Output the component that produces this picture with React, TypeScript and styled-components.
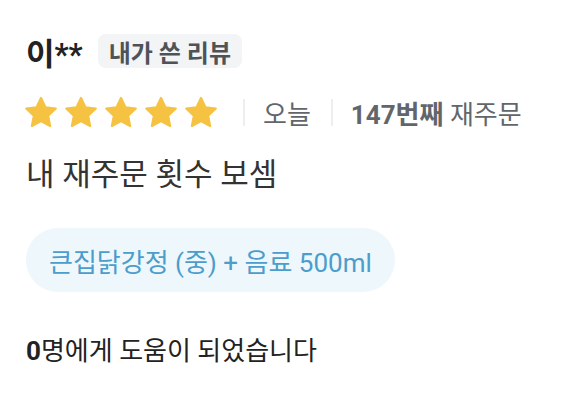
import React from 'react';
import styled, { createGlobalStyle } from 'styled-components';

const GlobalStyle = createGlobalStyle`
   body {
      margin: 0;
      background: #ffffff;
      font-family: Roboto, "Noto Sans CJK KR", sans-serif;
   }
`;

const Wrapper = styled.section`
   padding: 34px 26px 0 26px;
   display: flex;
   flex-direction: column;
   align-items: flex-start;
`;
const Header = styled.div`
   display: flex;
   align-items: center;
   gap: 15px;
   height: 34px;
`;
const Name = styled.span`
   font-size: 31px;
   font-weight: 700;
   color: #222;
`;
const Badge = styled.span`
   display: inline-flex;
   align-items: center;
   height: 34px;
   padding: 0 11px;
   border-radius: 8px;
   background: #f2f4f6;
   color: #4f5257;
   font-size: 24px;
   font-weight: 700;
`;
const MetaRow = styled.div`
   display: flex;
   align-items: center;
   height: 36px;
   margin-top: 26px;
`;
const Stars = styled.div`
   display: flex;
   gap: 8px;
   margin-left: -1px;
   margin-right: 6px;
`;
const Divider = styled.span`
   width: 2px;
   height: 27px;
   background: #eeeeee;
   margin: 0 18px 0 20px;
`;
const MetaText = styled.span<{ $bold?: boolean }>`
   font-size: 26px;
   color: #62666b;
   font-weight: ${(p) => (p.$bold ? 700 : 400)};
`;
const Body = styled.p`
   margin: 28px 0 0 0;
   font-size: 31px;
   line-height: 34px;
   color: #333;
`;
const Chip = styled.div`
   margin-top: 36px;
   height: 64px;
   padding: 0 23px;
   display: inline-flex;
   align-items: center;
   border-radius: 32px;
   background: #eef7fc;
   color: #4c9dcb;
   font-size: 26px;
`;
const Helpful = styled.p`
   margin: 44px 0 0 0;
   font-size: 26px;
   line-height: 30px;
   color: #222;
   b {
      font-weight: 700;
   }
`;

const starPoints = (() => {
   const pts: string[] = [];
   const cx = 16;
   const cy = 17.4;
   const R = 15.6;
   const r = 7.6;
   for (let i = 0; i < 10; i++) {
      const a = (Math.PI / 5) * i - Math.PI / 2;
      const rad = i % 2 === 0 ? R : r;
      pts.push(`${(cx + rad * Math.cos(a)).toFixed(2)},${(cy + rad * Math.sin(a)).toFixed(2)}`);
   }
   return pts.join(' ');
})();

const Star: React.FC = () => (
   <svg width="32" height="32" viewBox="0 0 32 32">
      <polygon
         points={starPoints}
         fill="#f6c242"
         stroke="#f6c242"
         strokeWidth="2"
         strokeLinejoin="round"
      />
   </svg>
);

const App: React.FC = () => (
   <>
      <GlobalStyle />
      <Wrapper>
         <Header>
            <Name>이**</Name>
            <Badge>내가 쓴 리뷰</Badge>
         </Header>
         <MetaRow>
            <Stars>
               {[0, 1, 2, 3, 4].map((i) => (
                  <Star key={`star${i}`} />
               ))}
            </Stars>
            <Divider />
            <MetaText>오늘</MetaText>
            <Divider />
            <MetaText $bold>147번째</MetaText>
            <MetaText>&nbsp;재주문</MetaText>
         </MetaRow>
         <Body>내 재주문 횟수 보셈</Body>
         <Chip>큰집닭강정 (중) + 음료 500ml</Chip>
         <Helpful>
            <b>0</b>명에게 도움이 되었습니다
         </Helpful>
      </Wrapper>
   </>
);

export default App;
